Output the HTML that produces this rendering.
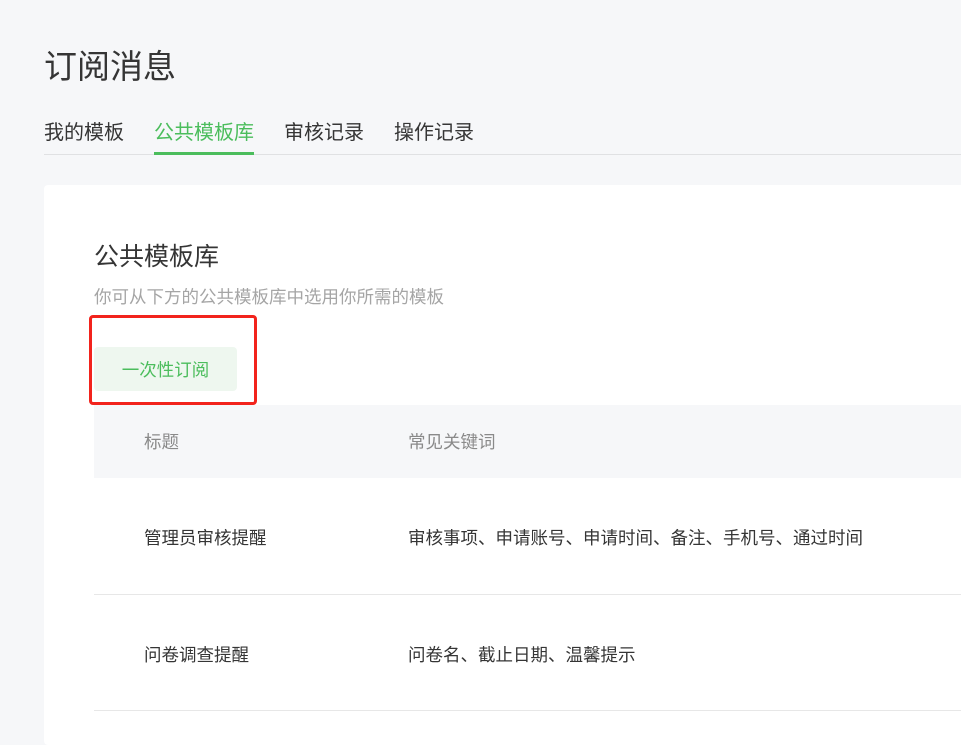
<!DOCTYPE html>
<html><head><meta charset="utf-8"><style>
*{margin:0;padding:0;box-sizing:border-box}
body{width:961px;height:725px;overflow:hidden;background:#f6f7f9;font-family:"Liberation Sans","Noto Sans CJK SC",sans-serif;position:relative;color:#353535}
.a{position:absolute;white-space:nowrap}
</style></head><body>
<div class="a" style="left:44px;top:44px;font-size:33px;line-height:46px;color:#353535">订阅消息</div>
<div class="a" style="left:44px;top:120px;font-size:20px;line-height:26px;">我的模板</div>
<div class="a" style="left:154px;top:120px;font-size:20px;line-height:26px;color:#4bbd5c">公共模板库</div>
<div class="a" style="left:284px;top:120px;font-size:20px;line-height:26px;">审核记录</div>
<div class="a" style="left:394px;top:120px;font-size:20px;line-height:26px;">操作记录</div>
<div class="a" style="left:44px;top:154px;width:917px;height:1px;background:#e0e1e3"></div>
<div class="a" style="left:154px;top:152px;width:100px;height:3px;background:#4bbd5c"></div>
<div class="a" style="left:44px;top:185px;width:940px;height:560px;background:#fff;border-radius:4px"></div>
<div class="a" style="left:94px;top:241px;font-size:25px;line-height:32px;color:#353535">公共模板库</div>
<div class="a" style="left:94px;top:285px;font-size:17.5px;line-height:24px;color:#a5a5a5">你可从下方的公共模板库中选用你所需的模板</div>
<div class="a" style="left:94px;top:347px;width:143px;height:44px;background:#eef7ef;border-radius:4px;color:#4bbd5c;font-size:17.5px;line-height:46px;text-align:center">一次性订阅</div>
<div class="a" style="left:89px;top:315px;width:168px;height:90px;border:3px solid #f2231c;border-radius:4px"></div>
<div class="a" style="left:94px;top:405px;width:867px;height:73px;background:#f6f7f9"></div>
<div class="a" style="left:144px;top:430px;font-size:17.5px;line-height:24px;color:#8a8a8a">标题</div>
<div class="a" style="left:408px;top:430px;font-size:17.5px;line-height:24px;color:#8a8a8a">常见关键词</div>
<div class="a" style="left:144px;top:526px;font-size:17.5px;line-height:24px;">管理员审核提醒</div>
<div class="a" style="left:408px;top:526px;font-size:17.5px;line-height:24px;">审核事项、申请账号、申请时间、备注、手机号、通过时间</div>
<div class="a" style="left:94px;top:594px;width:867px;height:1px;background:#e7e7e7"></div>
<div class="a" style="left:144px;top:643px;font-size:17.5px;line-height:24px;">问卷调查提醒</div>
<div class="a" style="left:408px;top:643px;font-size:17.5px;line-height:24px;">问卷名、截止日期、温馨提示</div>
<div class="a" style="left:94px;top:710px;width:867px;height:1px;background:#e7e7e7"></div>
</body></html>
